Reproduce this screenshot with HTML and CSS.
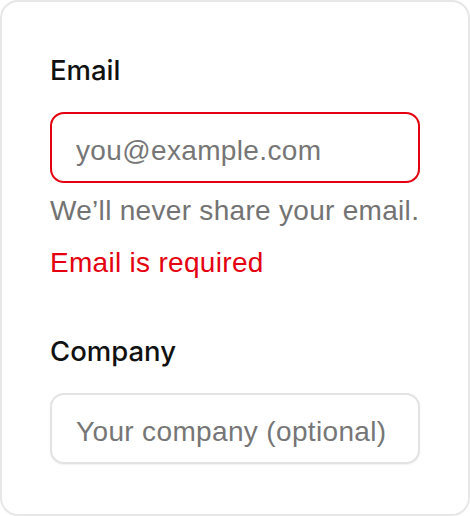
FILE: index.html
```html
<!DOCTYPE html>
<html lang="en">
<head>
<meta charset="utf-8">
<title>Form</title>
<link rel="stylesheet" href="styles.css">
</head>
<body>
<form class="card">
  <div class="field">
    <label class="label" for="email">Email</label>
    <input class="input input-error" id="email" type="email" placeholder="you@example.com">
    <p class="hint">We’ll never share your email.</p>
    <p class="error">Email is required</p>
  </div>
  <div class="field field-company">
    <label class="label" for="company">Company</label>
    <input class="input" id="company" type="text" placeholder="Your company (optional)">
  </div>
</form>
</body>
</html>
```
FILE: styles.css
```css
html, body {
  margin: 0;
  padding: 0;
  background: #ffffff;
}

.card {
  box-sizing: border-box;
  width: 470px;
  height: 516px;
  border: 2px solid #e7e7e7;
  border-radius: 18px;
  padding: 52px 48px 0 48px;
  background: #ffffff;
  display: flex;
  flex-direction: column;
}

.field {
  display: flex;
  flex-direction: column;
}

.field-company {
  margin-top: 54px;
}

.label {
  font-family: Inter, "Noto Sans", sans-serif;
  font-weight: 500;
  font-size: 27.5px;
  line-height: 32px;
  color: #111111;
  margin-bottom: 26px;
}

.input {
  box-sizing: border-box;
  width: 370px;
  height: 71px;
  border: 2px solid #e3e3e3;
  border-radius: 14px;
  padding: 6px 24px 0 24px;
  margin: 0;
  font-family: "Liberation Sans", Arial, sans-serif;
  font-size: 28px;
  letter-spacing: 0.35px;
  color: #222222;
  background: #ffffff;
  box-shadow: 0 1px 2px rgba(0, 0, 0, 0.06);
  outline: none;
}

.input::placeholder {
  color: #767676;
  opacity: 1;
}

.input-error {
  border-color: #e4000f;
  box-shadow: none;
}

.hint,
.error {
  margin: 0;
  font-family: "Liberation Sans", Arial, sans-serif;
  font-size: 28px;
  letter-spacing: 0.3px;
  line-height: 36px;
}

.hint {
  margin-top: 10px;
  color: #737373;
}

.error {
  margin-top: 16px;
  color: #e4000f;
}
```
